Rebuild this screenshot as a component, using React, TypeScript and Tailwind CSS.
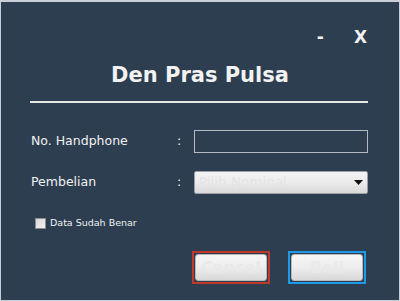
const labelFont = { fontFamily: '"DejaVu Sans", sans-serif' };

export default function App() {
  return (
    <div
      className="flex h-[301px] w-[400px] flex-col border-t-2 border-[#c9cfd6] border-x border-b bg-[#2c3e50] text-[#f2f2f2]"
      style={labelFont}
    >
      <div className="flex h-[44px] items-end justify-end gap-[30px] pr-[32px] text-[17px] font-bold leading-none">
        <span>-</span>
        <span>X</span>
      </div>

      <h1 className="mt-[19px] text-center text-[21px] font-bold leading-none">
        Den Pras Pulsa
      </h1>
      <div className="ml-[29px] mr-[31px] mt-[15px] h-[2px] bg-[#e6e6e6]" />

      <div className="mt-[27px] flex flex-col gap-[18px] pl-[30px] pr-[31px]">
        <div className="flex h-[23px] items-center text-[12.5px]">
          <span className="w-[146px]">No. Handphone</span>
          <span className="w-[17px]">:</span>
          <div className="h-[23px] flex-1 border border-[#b5bac1]" />
        </div>
        <div className="flex h-[23px] items-center text-[12.5px]">
          <span className="w-[146px]">Pembelian</span>
          <span className="w-[17px]">:</span>
          <div className="flex h-[23px] flex-1 items-center justify-between rounded-[2px] border border-[#9aa0a6] bg-gradient-to-b from-[#f4f4f4] via-[#ececec] to-[#d9d9d9] pl-[4px] pr-[4px]">
            <span className="text-[13.5px] text-[#e4e4e4]">Pilih Nominal</span>
            <svg width="9" height="5" viewBox="0 0 9 5">
              <path d="M0 0h9L4.5 5z" fill="#111" />
            </svg>
          </div>
        </div>
      </div>

      <label className="mt-[22px] flex items-center gap-[4px] pl-[34px] text-[9.5px]">
        <span className="h-[11px] w-[11px] border border-[#8d8d8d] bg-gradient-to-br from-[#d6d6d6] to-[#f5f5f5]" />
        <span>Data Sudah Benar</span>
      </label>

      <div className="mt-[21px] flex justify-end gap-[18px] pr-[33px]">
        <div className="h-[33px] w-[78px] border-2 border-[#c0392b] p-[1px]">
          <div className="flex h-full items-center justify-center rounded-[3px] border border-[#b9b9b9] bg-gradient-to-b from-[#f6f6f6] via-[#ededed] to-[#d8d8d8] text-[16px] font-bold text-[#e9e9e9]">
            Cancel
          </div>
        </div>
        <div className="h-[33px] w-[78px] border-2 border-[#1e9be8] p-[1px]">
          <div className="flex h-full items-center justify-center rounded-[3px] border border-[#b9b9b9] bg-gradient-to-b from-[#f6f6f6] via-[#ededed] to-[#d8d8d8] text-[16px] font-bold text-[#e9e9e9]">
            Beli
          </div>
        </div>
      </div>
    </div>
  );
}
